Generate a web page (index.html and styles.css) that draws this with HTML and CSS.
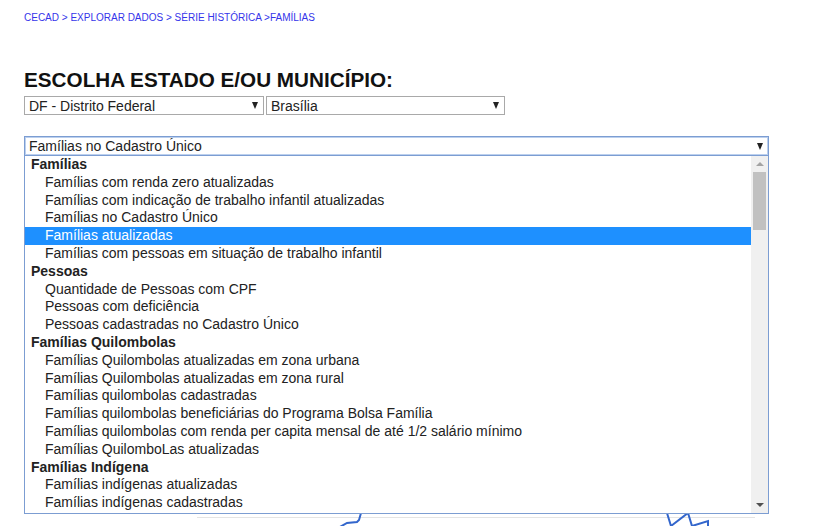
FILE: index.html
```html
<!DOCTYPE html>
<html lang="pt-BR">
<head>
<meta charset="utf-8">
<title>CECAD - Série Histórica</title>
<link rel="stylesheet" href="styles.css">
</head>
<body>
<div class="page">
  <nav class="crumbs">CECAD &gt; EXPLORAR DADOS &gt; SÉRIE HISTÓRICA &gt;FAMÍLIAS</nav>
  <h1 class="title">ESCOLHA ESTADO E/OU MUNICÍPIO:</h1>
  <div class="places">
    <div class="sel sel-uf"><span>DF - Distrito Federal</span><i class="caret"></i></div>
    <div class="sel sel-mun"><span>Brasília</span><i class="caret"></i></div>
  </div>

  <div class="combo">
    <div class="sel sel-main"><span>Famílias no Cadastro Único</span><i class="caret"></i></div>
    <div class="chart">
      <div class="axis"></div>
      <svg class="lines" width="822" height="20" viewBox="0 0 822 20">
        <polyline points="338,17 347,12 357,11 359,9 361,2" fill="none" stroke="#3366cc" stroke-width="2"/>
        <polyline points="667,2 671,15 688,2 692,15 708,10 708,17" fill="none" stroke="#3366cc" stroke-width="2"/>
      </svg>
    </div>
    <div class="popup">
      <div class="list">
        <div class="grp">Famílias</div>
        <div class="opt">Famílias com renda zero atualizadas</div>
        <div class="opt">Famílias com indicação de trabalho infantil atualizadas</div>
        <div class="opt">Famílias no Cadastro Único</div>
        <div class="opt active">Famílias atualizadas</div>
        <div class="opt">Famílias com pessoas em situação de trabalho infantil</div>
        <div class="grp">Pessoas</div>
        <div class="opt">Quantidade de Pessoas com CPF</div>
        <div class="opt">Pessoas com deficiência</div>
        <div class="opt">Pessoas cadastradas no Cadastro Único</div>
        <div class="grp">Famílias Quilombolas</div>
        <div class="opt">Famílias Quilombolas atualizadas em zona urbana</div>
        <div class="opt">Famílias Quilombolas atualizadas em zona rural</div>
        <div class="opt">Famílias quilombolas cadastradas</div>
        <div class="opt">Famílias quilombolas beneficiárias do Programa Bolsa Família</div>
        <div class="opt">Famílias quilombolas com renda per capita mensal de até 1/2 salário mínimo</div>
        <div class="opt">Famílias QuilomboLas atualizadas</div>
        <div class="grp">Famílias Indígena</div>
        <div class="opt">Famílias indígenas atualizadas</div>
        <div class="opt">Famílias indígenas cadastradas</div>
      </div>
      <div class="scrollbar">
        <i class="sb-up"></i>
        <div class="sb-track"><div class="sb-thumb"></div></div>
        <i class="sb-down"></i>
      </div>
    </div>
  </div>
</div>
</body>
</html>
```

FILE: styles.css
```css
html, body {
  margin: 0;
  padding: 0;
  background: #ffffff;
}
body {
  font-family: "Liberation Sans", Arial, sans-serif;
  color: #222222;
  width: 822px;
  height: 526px;
  overflow: hidden;
}
.page {
  padding: 12px 0 0 24px;
}
.crumbs {
  font-size: 10px;
  line-height: 11px;
  color: #3434ea;
}
.title {
  margin: 45px 0 0 0;
  font-size: 20.7px;
  line-height: 24px;
  font-weight: bold;
  color: #111111;
}
.places {
  display: flex;
  gap: 2px;
  margin-top: 4px;
}
.sel {
  box-sizing: border-box;
  height: 19px;
  border: 1px solid #a9a9a9;
  display: flex;
  align-items: center;
  justify-content: space-between;
  padding: 0 4px 0 4px;
  font-size: 14px;
  color: #222222;
  background: #fff;
}
.sel-uf { width: 240px; }
.sel-mun { width: 239px; }
.caret {
  width: 0;
  height: 0;
  border-left: 3.5px solid transparent;
  border-right: 3.5px solid transparent;
  border-top: 7px solid #222;
  margin-right: 1px;
}
.combo {
  position: relative;
  margin-top: 21px;
  width: 745px;
}
.sel-main {
  width: 745px;
  height: 20px;
  border-color: #7c9dd2;
  box-shadow: 0 0 0 1px #bcd0ee inset;
}
.chart {
  position: relative;
  height: 382px;
}
.axis {
  position: absolute;
  left: 173px;
  width: 558px;
  top: 361px;
  height: 1px;
  background: #e4e4e4;
}
.lines {
  position: absolute;
  left: -24px;
  top: 355px;
}
.popup {
  position: absolute;
  left: 0;
  top: 19px;
  width: 745px;
  height: 359px;
  box-sizing: border-box;
  border: 1px solid #7c9dd2;
  background: #fff;
  display: flex;
  overflow: hidden;
}
.list {
  flex: 1;
  overflow: hidden;
  font-size: 14px;
}
.grp, .opt {
  height: 17.8px;
  line-height: 17.8px;
  white-space: nowrap;
}
.grp {
  font-weight: bold;
  padding-left: 6px;
}
.opt {
  padding-left: 20px;
}
.opt.active {
  background: #1e90ff;
  color: #ffffff;
}
.scrollbar {
  width: 17px;
  background: #f0f0f0;
  display: flex;
  flex-direction: column;
  align-items: center;
}
.sb-up, .sb-down {
  width: 0;
  height: 0;
  border-left: 4px solid transparent;
  border-right: 4px solid transparent;
}
.sb-up {
  margin-top: 6px;
  border-bottom: 4px solid #a3a3a3;
}
.sb-down {
  margin-bottom: 6px;
  border-top: 4px solid #505050;
}
.sb-track {
  flex: 1;
  width: 100%;
  padding-top: 6px;
  box-sizing: border-box;
}
.sb-thumb {
  width: 13px;
  margin-left: 2px;
  height: 58px;
  background: #c1c1c1;
}
```
